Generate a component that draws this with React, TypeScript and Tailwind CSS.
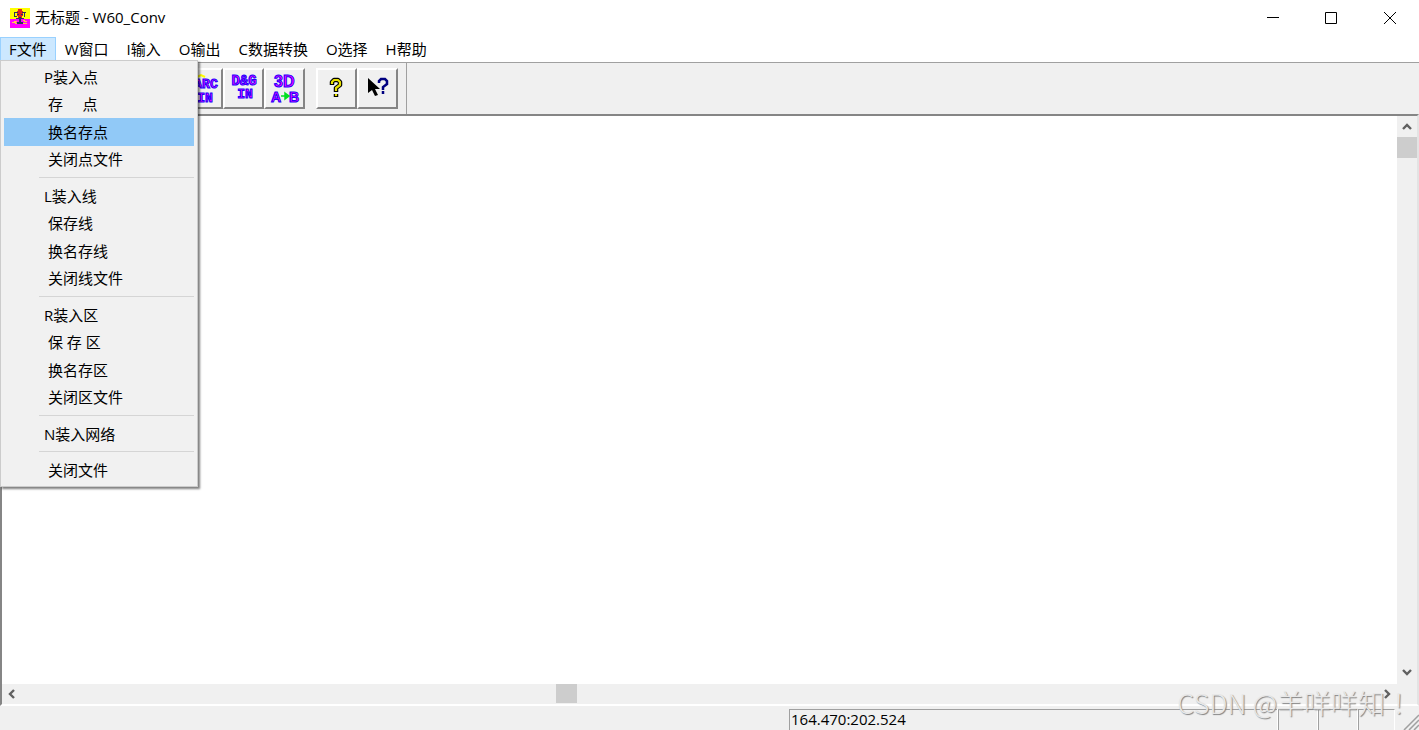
import type { ReactNode } from "react";
import { clsx } from "clsx";

const menus = ["F文件", "W窗口", "I输入", "O输出", "C数据转换", "O选择", "H帮助"];

// leading spaces are part of the captions
const groups = [
  ["P装入点", " 存     点", " 换名存点", " 关闭点文件"],
  ["L装入线", " 保存线", " 换名存线", " 关闭线文件"],
  ["R装入区", " 保 存 区", " 换名存区", " 关闭区文件"],
  ["N装入网络"],
  [" 关闭文件"],
];

function AppIcon() {
  return (
    <svg width="20" height="20" viewBox="0 0 20 20" shapeRendering="crispEdges">
      <path fill="#ffff00" d="M0 0h20v11H0z" />
      <path fill="#ff00ff" d="M0 11h20v9H0z" />
      <path fill="#e02020" d="M8 1h4v3H8zM7 3h6v5H7zM8 8h4v2H8z" />
      <path fill="#303060" d="M4 4h4v1H4zM4 5h1v3h2v1H4zM12 4h4v1h-4zM14 5h1v4h-1zM7 6h2v1H7zM11 6h2v1h-2zM9 9h2v5H9zM6 10h3v1H6zM11 10h3v1h-3zM7 14h6v2H7z" />
      <path fill="#ffd040" d="M4 13h3v1H4zM2 14h4v1H2zM13 12h2v1h-2zM14 13h3v1h-3zM5 15h2v1H5zM13 15h4v1h-4z" />
    </svg>
  );
}

function ToolButton({ label, children }: { label: string; children: ReactNode }) {
  return (
    <button aria-label={label} className="flex h-[41px] w-[41px] items-center justify-center border-2 border-t-white border-r-[#858585] border-b-[#858585] border-l-white bg-[#f0f0f0]">
      {children}
    </button>
  );
}

function Arrow({ label, d }: { label: string; d: string }) {
  return (
    <button aria-label={label} className="flex h-5 w-5 shrink-0 items-center justify-center">
      <svg width="10" height="10" viewBox="0 0 10 10" fill="none" stroke="#606060" strokeWidth="2.4">
        <path d={d} />
      </svg>
    </button>
  );
}

function FileMenu() {
  return (
    <div role="menu" className="absolute top-[23px] left-0 z-10 w-[198px] border border-[#cccccc] bg-[#f1f1f1] px-[3px] pt-[2px] pb-[3px] shadow-[2px_2px_2px_#00000080]">
      {groups.map((items, i) => (
        <div key={i}>
          {i > 0 && <div className="ml-[35px] flex h-[9px] items-center"><div className="h-px w-full bg-[#d5d5d5]" /></div>}
          <div className={clsx("grid", items.length > 1 ? "h-[110px] grid-rows-4" : "h-[27px]")}>
            {items.map((item) => (
              <button key={item} role="menuitem" className={clsx("pl-10 text-left leading-[26px] whitespace-pre", item === " 换名存点" && "bg-[#91c9f7]")}>
                {item}
              </button>
            ))}
          </div>
        </div>
      ))}
    </div>
  );
}

export default function App() {
  return (
    <div className="relative flex h-screen flex-col overflow-hidden bg-[#f0f0f0] font-['Open_Sans','Noto_Sans_CJK_SC',sans-serif] text-[15px] text-black">
      <header className="flex h-9 shrink-0 items-center bg-white pl-[10px]">
        <AppIcon />
        <h1 className="flex-1 pb-px pl-[5px]">无标题 - W60_Conv</h1>
        <button aria-label="最小化" className="flex h-9 w-[58px] items-center justify-center">
          <svg width="12" height="12" stroke="#000"><path d="M0 5.5h12" /></svg>
        </button>
        <button aria-label="最大化" className="flex h-9 w-[58px] items-center justify-center">
          <svg width="12" height="12" fill="none" stroke="#000"><path d="M.5.5h11v11H.5z" /></svg>
        </button>
        <button aria-label="关闭" className="flex h-9 w-[59px] items-center justify-center">
          <svg width="12" height="12" stroke="#000"><path d="M0 0l12 12M12 0L0 12" /></svg>
        </button>
      </header>

      <nav className="flex h-[26px] shrink-0 items-start bg-white pt-px">
        {menus.map((m, i) => (
          <div key={m} className="relative">
            <button className={clsx("h-6 border px-2 leading-5 whitespace-nowrap", i === 0 ? "border-[#99d1ff] bg-[#cce8ff]" : "border-transparent")}>{m}</button>
            {i === 0 && <FileMenu />}
          </div>
        ))}
      </nav>

      <div className="flex h-[52px] shrink-0 items-center border-t border-[#a0a0a0] bg-[#f0f0f0] pl-[182px] font-['Liberation_Mono',monospace] font-bold">
        <ToolButton label="ARC IN">
          <svg width="36" height="32" viewBox="0 0 36 32" fill="#ff00ff" stroke="#2000ff" strokeWidth="1" textAnchor="middle">
            <path d="M12 4l4-2 4 2" fill="none" stroke="#ffff00" strokeWidth="2" />
            <text x="21" y="15" fontSize="13">ARC</text>
            <text x="20" y="29" fontSize="13">IN</text>
          </svg>
        </ToolButton>
        <ToolButton label="D&G IN">
          <svg width="36" height="32" viewBox="0 0 36 32" fill="#ff00ff" stroke="#2000ff" strokeWidth="1" textAnchor="middle">
            <text x="18" y="12" fontSize="14">D&amp;G</text>
            <text x="19" y="25" fontSize="13">IN</text>
          </svg>
        </ToolButton>
        <ToolButton label="3D A→B">
          <svg width="36" height="32" viewBox="0 0 36 32" fill="#ff00ff" stroke="#2000ff" strokeWidth="1" fontFamily="Liberation Sans">
            <text x="7" y="14" fontSize="16">3D</text>
            <text x="4" y="29" fontSize="14">A</text>
            <text x="22" y="29" fontSize="14">B</text>
            <path d="M14 23h5M18 20l4 3-4 3z" fill="#00e020" stroke="#00e020" strokeWidth="1.500" />
          </svg>
        </ToolButton>
        <div className="w-[11px]" />
        <ToolButton label="帮助">
          <svg width="24" height="28" viewBox="0 0 24 28" fill="none" strokeLinejoin="round">
            <path d="M7 10V7l2-2h4l2 2v3l-4 3v4M11 19v3" stroke="#000" strokeWidth="4.500" />
            <path d="M7 9V7l2-2h4l2 2v3l-4 3v3M11 19v2" stroke="#e8e000" strokeWidth="2.200" />
          </svg>
        </ToolButton>
        <ToolButton label="这是什么">
          <svg width="28" height="28" viewBox="0 0 28 28" fill="none">
            <path d="M4 3v15l4-3 3 6 3-1-3-6h5z" fill="#000" />
            <path d="M15 8V6l2-2h4l2 2v3l-4 3v3M19 16v3" stroke="#000080" strokeWidth="2.500" />
          </svg>
        </ToolButton>
        <div className="ml-2 h-full border-l border-[#a0a0a0] shadow-[inset_1px_0_#fff]" />
      </div>

      <main className="flex min-h-0 flex-1 flex-col border-t-2 border-r-2 border-b-2 border-l-2 border-t-[#858585] border-r-[#e3e3e3] border-b-white border-l-[#858585]">
        <div className="flex min-h-0 flex-1">
          <div className="flex-1 bg-white" />
          <div className="flex w-5 flex-col bg-[#f0f0f0] pt-px pb-[2px]">
            <Arrow label="向上滚动" d="M1 7l4-4 4 4" />
            <div className="h-[21px] bg-[#cdcdcd]" />
            <div className="flex-1" />
            <Arrow label="向下滚动" d="M1 3l4 4 4-4" />
          </div>
        </div>
        <div className="flex h-5 shrink-0 items-start pr-5">
          <Arrow label="向左滚动" d="M7 1L3 5l4 4" />
          <div className="flex flex-1">
            <div className="grow-[2]" />
            <div className="h-[19px] w-[21px] bg-[#cdcdcd]" />
            <div className="grow-[3]" />
          </div>
          <Arrow label="向右滚动" d="M3 1l4 4-4 4" />
        </div>
      </main>

      <footer className="flex h-6 shrink-0 items-end justify-end">
        <div className="h-[21px] w-[489px] border-t border-l border-[#a0a0a0] pl-px leading-[18px]">164.470:202.524</div>
        <div className="h-[21px] w-10 border-t border-l border-[#a0a0a0] shadow-[-1px_0_#fff]" />
        <div className="h-[21px] w-10 border-t border-l border-[#a0a0a0] shadow-[-1px_0_#fff]" />
        <div className="h-[21px] w-[37px] border-t border-r border-l border-t-[#a0a0a0] border-r-white border-l-[#a0a0a0] shadow-[-1px_0_#fff]" />
        <svg width="24" height="20" stroke="#a0a0a0" strokeWidth="1.500">
          <path d="M9 20L24 5M14 20l10-10M19 20l5-5" />
        </svg>
      </footer>

      <div className="pointer-events-none absolute right-[7px] bottom-[5px] z-20 font-['Noto_Sans_CJK_SC',sans-serif] text-[27px] leading-[44px] font-light whitespace-nowrap text-[#e8e8e8] [text-shadow:1px_1px_1px_#808080]">
        CSDN @羊咩咩知<span className="font-['Noto_Sans_CJK_TC',sans-serif]" lang="zh-TW">！</span>
      </div>
    </div>
  );
}
